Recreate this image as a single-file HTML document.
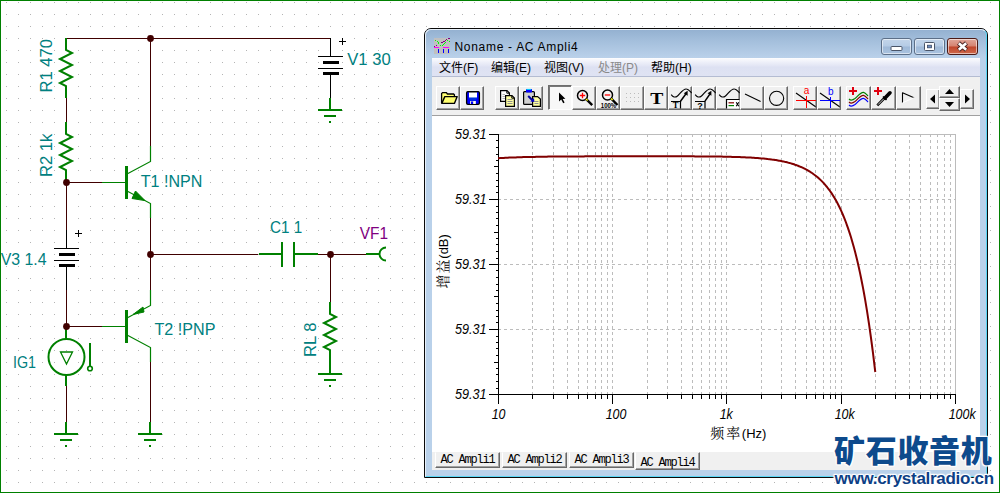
<!DOCTYPE html>
<html><head><meta charset="utf-8"><title>Noname - AC Ampli4</title>
<style>
html,body{margin:0;padding:0;background:#fff;}
body{width:1000px;height:493px;position:relative;overflow:hidden;font-family:"Liberation Sans","Noto Sans CJK SC",sans-serif;}
#win{position:absolute;left:424px;top:28px;width:564px;height:450px;box-sizing:border-box;border:1px solid #0a0a0a;border-radius:7px 7px 0 0;
 background:linear-gradient(to bottom,#93b0d0 0px,#a4bfdc 12px,#b9d0e9 28px,#b9d1ea 30px,#b9d1ea 100%);}
#win .hl{position:absolute;left:0;top:0;right:0;bottom:0;border-radius:6px 6px 0 0;border:1px solid;border-color:#e8f1fa #59d6f5 #59d6f5 #e8f1fa;}
#title{position:absolute;left:29.5px;top:9px;height:18px;line-height:18px;font-size:12px;letter-spacing:0.7px;color:#000;white-space:nowrap;}
#client{position:absolute;left:7px;top:29px;width:548px;height:412px;background:#f0f0f0;}
#menu{position:absolute;left:0;top:0;width:548px;height:19px;box-sizing:border-box;border-bottom:1px solid #b4bcd2;
 background:linear-gradient(to bottom,#fdfdfe 0px,#eef0f9 4px,#e2e5f4 8px,#dde1f2 9px,#dfe3f3 18px);font-size:12px;}
#menu span{position:absolute;top:3px;line-height:15px;white-space:nowrap;color:#000;}
#tb{position:absolute;left:0;top:19px;width:548px;height:39px;background:#f0f0f0;box-sizing:border-box;border-bottom:1px solid #a0a0a0;}
.b{position:absolute;top:9px;width:24px;height:24px;box-sizing:border-box;background:#f0f0f0;border:1px solid;border-color:#fff #696969 #696969 #fff;box-shadow:inset -1px -1px 0 #a0a0a0;}
.b.p{border-color:#6e6e6e #fff #fff #6e6e6e;box-shadow:inset 1px 1px 0 #787878;background:#f8f8f8;margin-top:-1px;height:25px;}

#tabs{position:absolute;left:0;top:394px;width:548px;height:18px;background:#f0f0f0;font-family:"Liberation Mono",monospace;font-size:12px;letter-spacing:-1.2px;}
.t{position:absolute;top:0;height:16px;box-sizing:border-box;border:1px solid;border-color:#f0f0f0 #696969 #696969 #fff;box-shadow:inset -1px -1px 0 #a0a0a0;line-height:14px;text-align:center;color:#000;white-space:nowrap;}
.t.a{top:0px;height:18px;border-top-color:#f0f0f0;line-height:20px;}
#wm1{position:absolute;left:834px;top:427px;font-family:"Noto Sans CJK SC",sans-serif;font-weight:900;font-size:31px;line-height:44px;color:#0d4a8c;white-space:nowrap;letter-spacing:0.7px;
 text-shadow:0 0 2px #fff,0 0 2px #fff,0 0 3px #fff,1px 1px 1px #fff,-1px -1px 1px #fff,1px -1px 1px #fff,-1px 1px 1px #fff;}
#wm2{position:absolute;left:834.5px;top:469px;font-family:"Liberation Sans",sans-serif;font-weight:bold;font-size:17px;line-height:20px;color:#0d3f86;white-space:nowrap;letter-spacing:-0.28px;
 text-shadow:0 0 2px #fff,0 0 2px #fff,0 0 3px #fff,1px 1px 1px #fff,-1px -1px 1px #fff,1px -1px 1px #fff,-1px 1px 1px #fff;}
.cb{position:absolute;top:9px;height:17px;box-sizing:border-box;border:1px solid #5c6f88;border-radius:3px;box-shadow:inset 0 0 0 1px rgba(255,255,255,.55);
 background:linear-gradient(to bottom,#c3d5ea 0,#b5cbe5 48%,#9fb9d8 52%,#aac3df 100%);}
.cb.x{border-color:#4b1a16;background:linear-gradient(to bottom,#e0a79b 0,#d5826f 48%,#c0452b 52%,#cf6a4c 100%);}
</style></head><body>
<svg id="sch" width="1000" height="493" viewBox="0 0 1000 493" style="position:absolute;left:0;top:0">
<defs><pattern id="gd" x="0" y="0" width="12" height="12" patternUnits="userSpaceOnUse"><rect x="6" y="2" width="1" height="1" fill="#b4b4b4"/></pattern></defs>
<rect x="0" y="0" width="1000" height="493" fill="#fff"/>
<rect x="0" y="0" width="1000" height="493" fill="url(#gd)" shape-rendering="crispEdges"/>
<path d="M66.5,38.5 H330.5 M150.5,38.5 V146 M66.5,98 V122 M66.5,182 V230 M66.5,182.5 H102 M150.5,218 V290 M150.5,254.5 H258 M318,254.5 H366 M330.5,254.5 V302 M66.5,290 V326 M66.5,326.5 H102 M66.5,386 V422 M150.5,362 V422" stroke="#400000" stroke-width="1" fill="none" shape-rendering="crispEdges"/>
<path d="M66,38 L66,50 L72,53 L60,59 L72,65 L60,71 L72,77 L60,83 L66,86 L66,98" fill="none" stroke="#008000" stroke-width="2" stroke-linejoin="miter"/>
<path d="M66,122 L66,134 L72,137 L60,143 L72,149 L60,155 L72,161 L60,167 L66,170 L66,182" fill="none" stroke="#008000" stroke-width="2" stroke-linejoin="miter"/>
<path d="M330,302 L330,314 L336,317 L324,323 L336,329 L324,335 L336,341 L324,347 L330,350 L330,362" fill="none" stroke="#008000" stroke-width="2" stroke-linejoin="miter"/>
<path d="M330,98 V111 M318,110 H342 M324,116 H336 M329,122 H331" stroke="#008000" stroke-width="2" fill="none" shape-rendering="crispEdges"/>
<path d="M330,362 V375 M318,374 H342 M324,380 H336 M329,386 H331" stroke="#008000" stroke-width="2" fill="none" shape-rendering="crispEdges"/>
<path d="M66,422 V435 M54,434 H78 M60,440 H72 M65,446 H67" stroke="#008000" stroke-width="2" fill="none" shape-rendering="crispEdges"/>
<path d="M150,422 V435 M138,434 H162 M144,440 H156 M149,446 H151" stroke="#008000" stroke-width="2" fill="none" shape-rendering="crispEdges"/>
<g shape-rendering="crispEdges" stroke="#000" fill="none"><path d="M330.5,38 V56 M318,56.5 H343 M318,68.5 H343 M330.5,75 V98" stroke-width="1"/><path d="M323,62.5 H339 M323,73.5 H339" stroke-width="3"/><path d="M339,41.5 H346 M342.5,38 V45" stroke-width="1"/></g>
<g shape-rendering="crispEdges" stroke="#000" fill="none"><path d="M66.5,230 V248 M54,248.5 H79 M54,260.5 H79 M66.5,267 V290" stroke-width="1"/><path d="M59,254.5 H75 M59,265.5 H75" stroke-width="3"/><path d="M75,233.5 H82 M78.5,230 V237" stroke-width="1"/></g>
<g stroke="#008000" fill="none"><path d="M102,182.5 H126" stroke-width="1" shape-rendering="crispEdges"/><path d="M126.5,166 V199" stroke-width="3" shape-rendering="crispEdges"/><path d="M127,174 L150.5,161.5 V146" stroke-width="1.2"/><path d="M127,191 L150.5,203.5 V218" stroke-width="1.2"/><path d="M145,200.6 L135.5,191 L132,198.5 Z" fill="#008000" stroke-width="1"/></g>
<g stroke="#008000" fill="none"><path d="M102,326.5 H126" stroke-width="1" shape-rendering="crispEdges"/><path d="M126.5,310 V343" stroke-width="3" shape-rendering="crispEdges"/><path d="M127,318 L150.5,305.5 V290" stroke-width="1.2"/><path d="M127,335 L150.5,347.5 V362" stroke-width="1.2"/><path d="M133,314.5 L143,307 L144,312 Z" fill="#008000" stroke-width="1"/></g>
<path d="M259,254 H282 M294,254 H318 M282,242 V267 M294,242 V267" stroke="#008000" stroke-width="2" fill="none" shape-rendering="crispEdges"/>
<path d="M366,254 H379" stroke="#008000" stroke-width="2" fill="none" shape-rendering="crispEdges"/>
<path d="M386,247.5 A6.5,6.5 0 0 0 386,260.5" stroke="#008000" stroke-width="2" fill="none"/>
<path d="M66,326 V339 M66,375 V386 M90,343 V366" stroke="#008000" stroke-width="2" fill="none" shape-rendering="crispEdges"/>
<circle cx="66.5" cy="357" r="18" stroke="#008000" stroke-width="2" fill="none"/>
<path d="M60.5,352 H72.5 L66.5,364 Z" stroke="#008000" stroke-width="1.3" fill="none"/>
<circle cx="90" cy="368.5" r="2.3" stroke="#008000" stroke-width="1.6" fill="none"/>
<circle cx="150.5" cy="38.5" r="3.4" fill="#400000"/>
<circle cx="66.5" cy="182.5" r="3.4" fill="#400000"/>
<circle cx="150.5" cy="254.5" r="3.4" fill="#400000"/>
<circle cx="330.5" cy="254.5" r="3.4" fill="#400000"/>
<circle cx="66.5" cy="326.5" r="3.4" fill="#400000"/>
<g font-family="'Liberation Sans', sans-serif">
<text x="347.3" y="65" fill="#008080" font-size="16.6">V1 30</text>
<text x="140.7" y="187" fill="#008080" font-size="16.6" textLength="61.7" lengthAdjust="spacingAndGlyphs">T1 !NPN</text>
<text x="154.5" y="335" fill="#008080" font-size="16.6" textLength="61" lengthAdjust="spacingAndGlyphs">T2 !PNP</text>
<text x="0.7" y="265" fill="#008080" font-size="16.6" textLength="45.9" lengthAdjust="spacingAndGlyphs">V3 1.4</text>
<text x="13" y="368" fill="#008080" font-size="16.6" textLength="23" lengthAdjust="spacingAndGlyphs">IG1</text>
<text x="270" y="233" fill="#008080" font-size="16.6" textLength="32.3" lengthAdjust="spacingAndGlyphs">C1 1</text>
<text x="359.8" y="239" fill="#800080" font-size="16.6" textLength="28.3" lengthAdjust="spacingAndGlyphs">VF1</text>
<text x="51.5" y="92.5" fill="#008080" font-size="16.6" transform="rotate(-90 51.5 92.5)">R1 470</text>
<text x="51.5" y="177" fill="#008080" font-size="16.6" transform="rotate(-90 51.5 177)">R2 1k</text>
<text x="315.5" y="357" fill="#008080" font-size="16.6" transform="rotate(-90 315.5 357)">RL 8</text>
</g>
<rect x="0.5" y="0.5" width="999" height="492" fill="none" stroke="#008000" stroke-width="1" shape-rendering="crispEdges"/>
</svg>
<div id="win"><div class="hl"></div>
<svg width="16" height="16" viewBox="0 0 16 16" shape-rendering="crispEdges" style="position:absolute;left:9px;top:9px"><rect x="0" y="0" width="16" height="16" fill="#c0c0c0"/><rect x="1" y="2" width="1" height="1" fill="#00ff00"/><rect x="3" y="3" width="1" height="1" fill="#00ff00"/><rect x="4" y="4" width="1" height="1" fill="#00ff00"/><rect x="4" y="5" width="1" height="1" fill="#00ff00"/><rect x="6" y="7" width="1" height="1" fill="#00ff00"/><rect x="8" y="7" width="1" height="1" fill="#00ff00"/><rect x="9" y="6" width="1" height="1" fill="#00ff00"/><rect x="10" y="5" width="1" height="1" fill="#00ff00"/><rect x="11" y="4" width="1" height="1" fill="#00ff00"/><rect x="13" y="2" width="1" height="1" fill="#00ff00"/><rect x="15" y="3" width="1" height="1" fill="#00ff00"/><rect x="14" y="0" width="2" height="1" fill="#800080"/><rect x="12" y="1" width="1" height="1" fill="#800080"/><rect x="11" y="2" width="1" height="1" fill="#800080"/><rect x="9" y="3" width="2" height="1" fill="#800080"/><rect x="7" y="4" width="2" height="1" fill="#800080"/><rect x="2" y="7" width="1" height="1" fill="#800080"/><rect x="0" y="8" width="1" height="1" fill="#800080"/><rect x="0" y="9" width="5" height="1" fill="#ff00ff"/><rect x="9" y="9" width="6" height="1" fill="#ff00ff"/><rect x="4" y="11" width="1" height="4" fill="#0000ff"/><rect x="9" y="11" width="1" height="4" fill="#0000ff"/><rect x="14" y="11" width="1" height="4" fill="#0000ff"/></svg>
<div id="title">Noname - AC Ampli4</div>
<div class="cb" style="left:456px;width:31px"><svg width="30" height="17" viewBox="0 0 30 17" style="position:absolute;left:-1px;top:-1px"><rect x="10" y="8.5" width="11" height="4" rx="1" fill="#fff" stroke="#4a5568" stroke-width="1"/></svg></div>
<div class="cb" style="left:489px;width:31px"><svg width="30" height="17" viewBox="0 0 30 17" style="position:absolute;left:-1px;top:-1px"><rect x="10.5" y="4.5" width="10" height="8" rx="1" fill="#fff" stroke="#4a5568" stroke-width="1"/><rect x="13.5" y="7.2" width="4" height="2.6" fill="#6f8fc0" stroke="#3c4a66" stroke-width=".8"/></svg></div>
<div class="cb x" style="left:522px;width:31px"><svg width="31" height="17" viewBox="0 0 31 17" style="position:absolute;left:-1px;top:-1px"><path d="M11.5,5 L19.5,12 M19.5,5 L11.5,12" stroke="#4a2220" stroke-width="4.4" stroke-linecap="butt"/><path d="M11.8,5.2 L19.2,11.8 M19.2,5.2 L11.8,11.8" stroke="#fff" stroke-width="2.6"/></svg></div>
<div id="client">
<div id="menu"><span style="left:7px">文件(F)</span><span style="left:59px">编辑(E)</span><span style="left:112px">视图(V)</span><span style="left:166px;color:#8a8a8a">处理(P)</span><span style="left:219px">帮助(H)</span></div>
<div id="tb"><div class="b " style="left:4px;width:24px"><svg width="24" height="24" viewBox="0 0 24 24" style="position:absolute;left:-1px;top:-1px;overflow:visible"><path d="M5.6,17 V7.6 L6.6,6.6 H10.4 L11.4,8 H17.6 L18.4,8.8 V10.5" fill="#ffff70" stroke="#000" stroke-width="1.3"/>
<path d="M5.8,17.4 L8.8,10.6 H21.2 L18.4,17.4 Z" fill="#ffff70" stroke="#000" stroke-width="1.4" stroke-linejoin="round"/></svg></div><div class="b " style="left:28px;width:24px"><svg width="24" height="24" viewBox="0 0 24 24" style="position:absolute;left:-1px;top:-1px;overflow:visible"><rect x="6.6" y="5.6" width="12.8" height="12.8" rx="1.3" fill="#0000ff" stroke="#000" stroke-width="1.3"/>
<rect x="9" y="6" width="8" height="5.6" fill="#fff"/><path d="M9,6 H17" stroke="#000" stroke-width="1"/>
<path d="M9,12.1 H17 M10,13.9 H16" stroke="#0080a0" stroke-width=".6"/>
<rect x="10" y="15" width="6" height="3" fill="#d8d8d8"/><rect x="11" y="15.5" width="2" height="2.5" fill="#0000ff"/><rect x="14" y="15.3" width="1" height="2.6" fill="#fff"/></svg></div><div class="b " style="left:63px;width:24px"><svg width="24" height="24" viewBox="0 0 24 24" style="position:absolute;left:-1px;top:-1px;overflow:visible"><path d="M5.6,4.6 H12 L14.4,7 V15.4 H5.6 Z" fill="#fff" stroke="#000" stroke-width="1.2"/><path d="M11.8,4.8 V7.2 H14.2" fill="none" stroke="#000" stroke-width="1"/>
<path d="M7.5,8.5 H10 M7.5,10.5 H10 M7.5,12.5 H10" stroke="#b0b0b0" stroke-width="1"/>
<path d="M10.6,9.6 H17 L19.4,12 V20.4 H10.6 Z" fill="#ffffa0" stroke="#000" stroke-width="1.2"/><path d="M16.8,9.8 V12.2 H19.2" fill="none" stroke="#000" stroke-width="1"/>
<path d="M12.5,13.5 H17.5 M12.5,15.5 H17.5 M12.5,17.5 H17.5" stroke="#909090" stroke-width="1"/></svg></div><div class="b " style="left:87px;width:24px"><svg width="24" height="24" viewBox="0 0 24 24" style="position:absolute;left:-1px;top:-1px;overflow:visible"><rect x="4.6" y="5.6" width="10.8" height="12.8" rx="1" fill="#d0d0d0" stroke="#000" stroke-width="1.2"/>
<rect x="7" y="3" width="6" height="3.6" rx=".8" fill="#0000ff"/><path d="M7.5,3.4 H12" stroke="#00e0ff" stroke-width="1"/>
<path d="M13.6,10.6 H18.6 L21.4,13 V20.4 H13.6 Z" fill="#ffffa0" stroke="#000" stroke-width="1.2"/>
<path d="M15.5,15.5 H19.5 M15.5,17.5 H19.5" stroke="#909090" stroke-width="1"/>
<path d="M9.2,10 L13.4,14.2" stroke="#0000a0" stroke-width="2"/><path d="M15.4,16 L15,12 L11.4,15.6 Z" fill="#0000c0"/></svg></div><div class="b p" style="left:116px;width:24px"><svg width="24" height="24" viewBox="0 0 24 24" style="position:absolute;left:-1px;top:-1px;overflow:visible"><path d="M11,7.5 V16.5 L13.2,14.6 L15.2,18.2 L16.6,17.4 L14.7,14 L17.4,13.8 Z" fill="#000"/></svg></div><div class="b " style="left:140px;width:24px"><svg width="24" height="24" viewBox="0 0 24 24" style="position:absolute;left:-1px;top:-1px;overflow:visible"><circle cx="10.5" cy="9.5" r="5" fill="#f4f4f4" stroke="#000" stroke-width="1.5"/>
<path d="M7.8,9.5 H13.2 M10.5,6.8 V12.2" stroke="#ff0000" stroke-width="1.3"/>
<path d="M14.2,13.2 L20.2,19.2" stroke="#000" stroke-width="2.4"/><path d="M14,13 L15.6,14.6" stroke="#ffff00" stroke-width="1.4"/></svg></div><div class="b " style="left:164px;width:24px"><svg width="24" height="24" viewBox="0 0 24 24" style="position:absolute;left:-1px;top:-1px;overflow:visible"><circle cx="11.5" cy="9" r="5" fill="#f4f4f4" stroke="#000" stroke-width="1.5"/>
<path d="M8.8,9 H14.2" stroke="#ff0000" stroke-width="1.3"/>
<path d="M15.2,12.7 L21.5,19" stroke="#000" stroke-width="2.4"/><path d="M15,12.5 L16.6,14.1" stroke="#ffff00" stroke-width="1.4"/>
<text x="4.8" y="22" font-family="'Liberation Sans',sans-serif" font-weight="bold" font-size="7" fill="#000" textLength="15.4" lengthAdjust="spacingAndGlyphs">100%</text></svg></div><div class="b " style="left:188px;width:24px"><svg width="24" height="24" viewBox="0 0 24 24" style="position:absolute;left:-1px;top:-1px;overflow:visible"><rect x="6" y="7" width="1" height="1" fill="#bcbcbc"/><rect x="6" y="11" width="1" height="1" fill="#bcbcbc"/><rect x="6" y="15" width="1" height="1" fill="#bcbcbc"/><rect x="10" y="7" width="1" height="1" fill="#bcbcbc"/><rect x="10" y="11" width="1" height="1" fill="#bcbcbc"/><rect x="10" y="15" width="1" height="1" fill="#bcbcbc"/><rect x="14" y="7" width="1" height="1" fill="#bcbcbc"/><rect x="14" y="11" width="1" height="1" fill="#bcbcbc"/><rect x="14" y="15" width="1" height="1" fill="#bcbcbc"/><rect x="18" y="7" width="1" height="1" fill="#bcbcbc"/><rect x="18" y="11" width="1" height="1" fill="#bcbcbc"/><rect x="18" y="15" width="1" height="1" fill="#bcbcbc"/></svg></div><div class="b " style="left:212px;width:24px"><svg width="24" height="24" viewBox="0 0 24 24" style="position:absolute;left:-1px;top:-1px;overflow:visible"><text x="12.8" y="17.8" text-anchor="middle" font-family="'Liberation Serif',serif" font-weight="bold" font-size="17.5" fill="#000" transform="translate(12.8 0) scale(1.12 1) translate(-12.8 0)">T</text></svg></div><div class="b " style="left:236px;width:24px"><svg width="24" height="24" viewBox="0 0 24 24" style="position:absolute;left:-1px;top:-1px;overflow:visible"><path d="M3.2,8.6 C5,11 7,12 9.5,10 C12,8 15,2.5 18.5,3 C20.5,3.2 22,5.5 23.6,7" fill="none" stroke="#000" stroke-width="1.1"/>
<path d="M3,15.5 H12.5 M12.5,15 V22.5" stroke="#000" stroke-width="1.2" fill="none"/><path d="M12.5,15.2 L18,7.8" stroke="#000" stroke-width="1.5"/><path d="M19.6,4.8 L19.6,9.8 L15.8,7.2 Z" fill="#000"/>
<text x="7.6" y="22.3" text-anchor="middle" font-family="'Liberation Serif',serif" font-weight="bold" font-size="8.5" fill="#000">T</text></svg></div><div class="b " style="left:260px;width:24px"><svg width="24" height="24" viewBox="0 0 24 24" style="position:absolute;left:-1px;top:-1px;overflow:visible"><path d="M3.2,8.6 C5,11 7,12 9.5,10 C12,8 15,2.5 18.5,3 C20.5,3.2 22,5.5 23.6,7" fill="none" stroke="#000" stroke-width="1.1"/>
<path d="M3,15.5 H13 M13,15 V22.5" stroke="#000" stroke-width="1.2" fill="none"/><path d="M13,15.2 L18,7.8" stroke="#000" stroke-width="1.5"/><path d="M19.4,4.8 L19.4,9.8 L15.6,7.2 Z" fill="#000"/>
<text x="8" y="22.6" text-anchor="middle" font-family="'Liberation Sans',sans-serif" font-weight="bold" font-size="9" fill="#000">?</text></svg></div><div class="b " style="left:284px;width:24px"><svg width="24" height="24" viewBox="0 0 24 24" style="position:absolute;left:-1px;top:-1px;overflow:visible"><path d="M3.2,8.6 C5,11 7,12 9.5,10 C12,8 15,2.5 18.5,3 C20.5,3.2 22,5.5 23.6,7" fill="none" stroke="#000" stroke-width="1.1"/>
<rect x="10.5" y="13.5" width="13" height="9" fill="#fff"/><path d="M10.5,22.5 V13.5 H23.5" stroke="#000" stroke-width="1.2" fill="none"/>
<path d="M12.5,16.8 H18" stroke="#800000" stroke-width="1.2"/><path d="M12.5,19.6 H18" stroke="#008000" stroke-width="1.2"/>
<path d="M20.2,16.2 L22.8,20.2 M22.8,16.2 L20.2,20.2" stroke="#000" stroke-width="1.1"/></svg></div><div class="b " style="left:308px;width:24px"><svg width="24" height="24" viewBox="0 0 24 24" style="position:absolute;left:-1px;top:-1px;overflow:visible"><path d="M5,8 L20.6,15.4" stroke="#000" stroke-width="1.1"/></svg></div><div class="b " style="left:332px;width:24px"><svg width="24" height="24" viewBox="0 0 24 24" style="position:absolute;left:-1px;top:-1px;overflow:visible"><circle cx="12.6" cy="12.3" r="7.1" fill="none" stroke="#000" stroke-width="1.1"/></svg></div><div class="b " style="left:361px;width:24px"><svg width="24" height="24" viewBox="0 0 24 24" style="position:absolute;left:-1px;top:-1px;overflow:visible"><path d="M3,7 L22.6,20.8" stroke="#000" stroke-width="1.1"/><path d="M3,14.5 H23 M13.5,9.5 V22" stroke="#ff0000" stroke-width="1.1" shape-rendering="crispEdges"/>
<text x="13.6" y="8.2" text-anchor="middle" font-family="'Liberation Sans',sans-serif" font-size="10" fill="#ff0000">a</text></svg></div><div class="b " style="left:385px;width:24px"><svg width="24" height="24" viewBox="0 0 24 24" style="position:absolute;left:-1px;top:-1px;overflow:visible"><path d="M3,7 L22.6,20.8" stroke="#000" stroke-width="1.1"/><path d="M3,14.5 H23 M13.5,10.5 V22" stroke="#0000ff" stroke-width="1.1" shape-rendering="crispEdges"/>
<text x="13.8" y="8.6" text-anchor="middle" font-family="'Liberation Sans',sans-serif" font-size="10" fill="#0000ff">b</text></svg></div><div class="b " style="left:414px;width:25px"><svg width="25" height="24" viewBox="0 0 25 24" style="position:absolute;left:-1px;top:-1px;overflow:visible"><path d="M3,5 H11 M7,1 V9" stroke="#e00010" stroke-width="2.6" shape-rendering="crispEdges"/><path d="M3,13 C5,15 7,14 9,12.5 C12,10 14.5,6 17.5,6.3 C19.5,6.6 21,9 22,10" fill="none" stroke="#008000" stroke-width="1.2"/><path d="M3,13 C5,15 7,14 9,12.5 C12,10 14.5,6 17.5,6.3 C19.5,6.6 21,9 22,10" fill="none" stroke="#800000" stroke-width="1.2" transform="translate(0 3)"/><path d="M3,13 C5,15 7,14 9,12.5 C12,10 14.5,6 17.5,6.3 C19.5,6.6 21,9 22,10" fill="none" stroke="#0000ff" stroke-width="1.2" transform="translate(0 6)"/></svg></div><div class="b " style="left:439px;width:25px"><svg width="25" height="24" viewBox="0 0 25 24" style="position:absolute;left:-1px;top:-1px;overflow:visible"><path d="M3,5 H11 M7,1 V9" stroke="#e00010" stroke-width="2.6" shape-rendering="crispEdges"/><path d="M6.3,19.3 L13.5,12" stroke="#000" stroke-width="2.6"/><path d="M7,18.6 L13,12.6" stroke="#f0f0f0" stroke-width=".9"/>
<path d="M12,10.5 L15.5,14" stroke="#000" stroke-width="1.6"/><path d="M14,12 L19,6.8" stroke="#000" stroke-width="3.6" stroke-linecap="round"/></svg></div><div class="b " style="left:464px;width:25px"><svg width="25" height="24" viewBox="0 0 25 24" style="position:absolute;left:-1px;top:-1px;overflow:visible"><path d="M6.5,6.5 V17" stroke="#000" stroke-width="1.1"/><path d="M6.5,6.8 L18,11.8" stroke="#000" stroke-width="1.1"/><path d="M18,11.8 L6.5,16.8" stroke="#fff" stroke-width="1.1"/></svg></div><div class="b" style="left:494px;top:12px;width:14px;height:20px"><svg width="14" height="20" viewBox="0 0 14 20" style="position:absolute;left:-1px;top:-1px;overflow:visible"><path d="M4,10 L9,5.5 V14.5 Z" fill="#000"/></svg></div><div class="b" style="left:528px;top:12px;width:14px;height:20px"><svg width="14" height="20" viewBox="0 0 14 20" style="position:absolute;left:-1px;top:-1px;overflow:visible"><path d="M10,10 L5,5.5 V14.5 Z" fill="#000"/></svg></div><div class="b" style="left:507px;top:9px;width:21px;height:12px"><svg width="21" height="12" viewBox="0 0 21 12" style="position:absolute;left:-1px;top:-1px;overflow:visible"><path d="M10.5,3 L15,8 H6 Z" fill="#000"/></svg></div><div class="b" style="left:507px;top:21px;width:21px;height:13px"><svg width="21" height="13" viewBox="0 0 21 13" style="position:absolute;left:-1px;top:-1px;overflow:visible"><path d="M10.5,9 L15,4 H6 Z" fill="#000"/></svg></div></div>
<svg id="plot" width="548" height="336" viewBox="432 116 548 336" style="position:absolute;left:0;top:58px">
<rect x="432" y="116" width="548" height="336" fill="#fff"/>
<path d="M532.5,134 V394 M553.5,134 V394 M567.5,134 V394 M578.5,134 V394 M587.5,134 V394 M595.5,134 V394 M601.5,134 V394 M607.5,134 V394 M612.5,134 V394 M647.5,134 V394 M667.5,134 V394 M681.5,134 V394 M692.5,134 V394 M701.5,134 V394 M709.5,134 V394 M715.5,134 V394 M721.5,134 V394 M726.5,134 V394 M761.5,134 V394 M781.5,134 V394 M795.5,134 V394 M806.5,134 V394 M815.5,134 V394 M823.5,134 V394 M830.5,134 V394 M835.5,134 V394 M841.5,134 V394 M875.5,134 V394 M895.5,134 V394 M909.5,134 V394 M920.5,134 V394 M930.5,134 V394 M937.5,134 V394 M944.5,134 V394 M950.5,134 V394" stroke="#bcbcbc" stroke-width="1" stroke-dasharray="3 3" fill="none" shape-rendering="crispEdges"/>
<path d="M498,199.5 H955 M498,264.5 H955 M498,329.5 H955" stroke="#bcbcbc" stroke-width="1" stroke-dasharray="3 3" fill="none" shape-rendering="crispEdges"/>
<path d="M498,134.5 H956 M955.5,134 V394" stroke="#bcbcbc" stroke-width="1" fill="none" shape-rendering="crispEdges"/>
<path d="M498.5,134 V404 M489,394.5 H956 M489,134.5 H498 M489,199.5 H498 M489,264.5 H498 M489,329.5 H498 M489,394.5 H498 M496,140.5 H498 M496,147.5 H498 M496,154.5 H498 M496,160.5 H498 M494,166.5 H498 M496,173.5 H498 M496,180.5 H498 M496,186.5 H498 M496,192.5 H498 M496,206.5 H498 M496,212.5 H498 M496,218.5 H498 M496,225.5 H498 M494,232.5 H498 M496,238.5 H498 M496,244.5 H498 M496,251.5 H498 M496,258.5 H498 M496,270.5 H498 M496,277.5 H498 M496,284.5 H498 M496,290.5 H498 M494,296.5 H498 M496,303.5 H498 M496,310.5 H498 M496,316.5 H498 M496,322.5 H498 M496,336.5 H498 M496,342.5 H498 M496,348.5 H498 M496,355.5 H498 M494,362.5 H498 M496,368.5 H498 M496,374.5 H498 M496,381.5 H498 M496,388.5 H498 M498.5,394 V404 M532.5,394 V399 M553.5,394 V399 M567.5,394 V399 M578.5,394 V399 M587.5,394 V399 M595.5,394 V399 M601.5,394 V399 M607.5,394 V399 M612.5,394 V404 M647.5,394 V399 M667.5,394 V399 M681.5,394 V399 M692.5,394 V399 M701.5,394 V399 M709.5,394 V399 M715.5,394 V399 M721.5,394 V399 M726.5,394 V404 M761.5,394 V399 M781.5,394 V399 M795.5,394 V399 M806.5,394 V399 M815.5,394 V399 M823.5,394 V399 M830.5,394 V399 M835.5,394 V399 M841.5,394 V404 M875.5,394 V399 M895.5,394 V399 M909.5,394 V399 M920.5,394 V399 M930.5,394 V399 M937.5,394 V399 M944.5,394 V399 M950.5,394 V399 M955.5,394 V404" stroke="#000" stroke-width="1" fill="none" shape-rendering="crispEdges"/>
<path d="M498.0,158.2 L499.0,158.2 L500.0,158.1 L501.0,158.0 L502.0,158.0 L503.0,157.9 L504.0,157.9 L505.0,157.8 L506.0,157.8 L507.0,157.7 L508.0,157.7 L509.0,157.6 L510.0,157.6 L511.0,157.6 L512.0,157.5 L513.0,157.5 L514.0,157.4 L515.0,157.4 L516.0,157.4 L517.0,157.3 L518.0,157.3 L519.0,157.3 L520.0,157.2 L521.0,157.2 L522.0,157.2 L523.0,157.1 L524.0,157.1 L525.0,157.1 L526.0,157.1 L527.0,157.0 L528.0,157.0 L529.0,157.0 L530.0,157.0 L531.0,156.9 L532.0,156.9 L533.0,156.9 L534.0,156.9 L535.0,156.9 L536.0,156.8 L537.0,156.8 L538.0,156.8 L539.0,156.8 L540.0,156.8 L541.0,156.8 L542.0,156.7 L543.0,156.7 L544.0,156.7 L545.0,156.7 L546.0,156.7 L547.0,156.7 L548.0,156.6 L549.0,156.6 L550.0,156.6 L551.0,156.6 L552.0,156.6 L553.0,156.6 L554.0,156.6 L555.0,156.6 L556.0,156.5 L557.0,156.5 L558.0,156.5 L559.0,156.5 L560.0,156.5 L561.0,156.5 L562.0,156.5 L563.0,156.5 L564.0,156.5 L565.0,156.5 L566.0,156.5 L567.0,156.5 L568.0,156.4 L569.0,156.4 L570.0,156.4 L571.0,156.4 L572.0,156.4 L573.0,156.4 L574.0,156.4 L575.0,156.4 L576.0,156.4 L577.0,156.4 L578.0,156.4 L579.0,156.4 L580.0,156.4 L581.0,156.4 L582.0,156.4 L583.0,156.4 L584.0,156.4 L585.0,156.3 L586.0,156.3 L587.0,156.3 L588.0,156.3 L589.0,156.3 L590.0,156.3 L591.0,156.3 L592.0,156.3 L593.0,156.3 L594.0,156.3 L595.0,156.3 L596.0,156.3 L597.0,156.3 L598.0,156.3 L599.0,156.3 L600.0,156.3 L601.0,156.3 L602.0,156.3 L603.0,156.3 L604.0,156.3 L605.0,156.3 L606.0,156.3 L607.0,156.3 L608.0,156.3 L609.0,156.3 L610.0,156.3 L611.0,156.3 L612.0,156.3 L613.0,156.3 L614.0,156.3 L615.0,156.3 L616.0,156.3 L617.0,156.3 L618.0,156.3 L619.0,156.3 L620.0,156.3 L621.0,156.3 L622.0,156.3 L623.0,156.3 L624.0,156.3 L625.0,156.3 L626.0,156.3 L627.0,156.3 L628.0,156.2 L629.0,156.2 L630.0,156.2 L631.0,156.2 L632.0,156.2 L633.0,156.2 L634.0,156.2 L635.0,156.2 L636.0,156.2 L637.0,156.2 L638.0,156.2 L639.0,156.2 L640.0,156.2 L641.0,156.2 L642.0,156.2 L643.0,156.2 L644.0,156.2 L645.0,156.2 L646.0,156.2 L647.0,156.2 L648.0,156.2 L649.0,156.2 L650.0,156.2 L651.0,156.2 L652.0,156.2 L653.0,156.2 L654.0,156.2 L655.0,156.2 L656.0,156.2 L657.0,156.2 L658.0,156.2 L659.0,156.3 L660.0,156.3 L661.0,156.3 L662.0,156.3 L663.0,156.3 L664.0,156.3 L665.0,156.3 L666.0,156.3 L667.0,156.3 L668.0,156.3 L669.0,156.3 L670.0,156.3 L671.0,156.3 L672.0,156.3 L673.0,156.3 L674.0,156.3 L675.0,156.3 L676.0,156.3 L677.0,156.3 L678.0,156.3 L679.0,156.3 L680.0,156.3 L681.0,156.3 L682.0,156.3 L683.0,156.3 L684.0,156.3 L685.0,156.3 L686.0,156.3 L687.0,156.3 L688.0,156.3 L689.0,156.3 L690.0,156.3 L691.0,156.3 L692.0,156.3 L693.0,156.3 L694.0,156.3 L695.0,156.4 L696.0,156.4 L697.0,156.4 L698.0,156.4 L699.0,156.4 L700.0,156.4 L701.0,156.4 L702.0,156.4 L703.0,156.4 L704.0,156.4 L705.0,156.4 L706.0,156.4 L707.0,156.4 L708.0,156.5 L709.0,156.5 L710.0,156.5 L711.0,156.5 L712.0,156.5 L713.0,156.5 L714.0,156.5 L715.0,156.5 L716.0,156.6 L717.0,156.6 L718.0,156.6 L719.0,156.6 L720.0,156.6 L721.0,156.6 L722.0,156.6 L723.0,156.7 L724.0,156.7 L725.0,156.7 L726.0,156.7 L727.0,156.7 L728.0,156.8 L729.0,156.8 L730.0,156.8 L731.0,156.8 L732.0,156.9 L733.0,156.9 L734.0,156.9 L735.0,157.0 L736.0,157.0 L737.0,157.0 L738.0,157.1 L739.0,157.1 L740.0,157.1 L741.0,157.2 L742.0,157.2 L743.0,157.2 L744.0,157.3 L745.0,157.3 L746.0,157.4 L747.0,157.4 L748.0,157.5 L749.0,157.5 L750.0,157.6 L751.0,157.6 L752.0,157.7 L753.0,157.8 L754.0,157.8 L755.0,157.9 L756.0,158.0 L757.0,158.0 L758.0,158.1 L759.0,158.2 L760.0,158.3 L761.0,158.4 L762.0,158.4 L763.0,158.5 L764.0,158.6 L765.0,158.7 L766.0,158.8 L767.0,158.9 L768.0,159.1 L769.0,159.2 L770.0,159.3 L771.0,159.4 L772.0,159.6 L773.0,159.7 L774.0,159.8 L775.0,160.0 L776.0,160.1 L777.0,160.3 L778.0,160.5 L779.0,160.7 L780.0,160.8 L781.0,161.0 L782.0,161.2 L783.0,161.4 L784.0,161.6 L785.0,161.9 L786.0,162.1 L787.0,162.3 L788.0,162.6 L789.0,162.9 L790.0,163.1 L791.0,163.4 L792.0,163.7 L793.0,164.0 L794.0,164.3 L795.0,164.7 L796.0,165.0 L797.0,165.4 L798.0,165.8 L799.0,166.2 L800.0,166.6 L801.0,167.0 L802.0,167.4 L803.0,167.9 L804.0,168.4 L805.0,168.9 L806.0,169.4 L807.0,170.0 L808.0,170.5 L809.0,171.1 L810.0,171.7 L811.0,172.4 L812.0,173.0 L813.0,173.7 L814.0,174.5 L815.0,175.2 L816.0,176.0 L817.0,176.8 L818.0,177.6 L819.0,178.5 L820.0,179.4 L821.0,180.4 L822.0,181.4 L823.0,182.4 L824.0,183.5 L825.0,184.6 L826.0,185.8 L827.0,187.0 L828.0,188.3 L829.0,189.6 L830.0,191.0 L831.0,192.4 L832.0,193.9 L833.0,195.5 L834.0,197.1 L835.0,198.8 L836.0,200.5 L837.0,202.3 L838.0,204.2 L839.0,206.2 L840.0,208.3 L841.0,210.4 L842.0,212.6 L843.0,215.0 L844.0,217.4 L845.0,219.9 L846.0,222.5 L847.0,225.3 L848.0,228.1 L849.0,231.1 L850.0,234.1 L851.0,237.3 L852.0,240.7 L853.0,244.2 L854.0,247.8 L855.0,251.6 L856.0,255.5 L857.0,259.6 L858.0,263.8 L859.0,268.2 L860.0,272.9 L861.0,277.7 L862.0,282.7 L863.0,287.9 L864.0,293.3 L865.0,298.9 L866.0,304.8 L867.0,310.9 L868.0,317.3 L869.0,323.9 L870.0,330.8 L871.0,338.0 L872.0,345.5 L873.0,353.2 L874.0,361.4 L875.0,369.8 L875.3,372.0" stroke="#800000" stroke-width="2" fill="none" stroke-linejoin="round"/>
<g font-family="'Liberation Sans', sans-serif" font-style="italic" font-size="14" fill="#000">
<text x="455" y="139.1" textLength="31.6" lengthAdjust="spacingAndGlyphs">59.31</text>
<text x="455" y="204.1" textLength="31.6" lengthAdjust="spacingAndGlyphs">59.31</text>
<text x="455" y="269.1" textLength="31.6" lengthAdjust="spacingAndGlyphs">59.31</text>
<text x="455" y="334.1" textLength="31.6" lengthAdjust="spacingAndGlyphs">59.31</text>
<text x="455" y="399.1" textLength="31.6" lengthAdjust="spacingAndGlyphs">59.31</text>
<text x="491.7" y="419.1" textLength="13.8" lengthAdjust="spacingAndGlyphs">10</text>
<text x="605.7" y="419.1" textLength="20.7" lengthAdjust="spacingAndGlyphs">100</text>
<text x="719.7" y="419.1" textLength="13.1" lengthAdjust="spacingAndGlyphs">1k</text>
<text x="834.7" y="419.1" textLength="20.0" lengthAdjust="spacingAndGlyphs">10k</text>
<text x="948.7" y="419.1" textLength="26.9" lengthAdjust="spacingAndGlyphs">100k</text>
</g>
<text x="710.3" y="437.8" font-size="14" fill="#000" font-family="'Liberation Sans', 'Noto Serif CJK SC', serif"><tspan letter-spacing="2">频率</tspan><tspan font-size="13" dx="-0.5">(Hz)</tspan></text>
<text x="447.8" y="288.6" font-size="14" fill="#000" transform="rotate(-90 447.8 288.6)" font-family="'Liberation Sans', 'Noto Serif CJK SC', serif"><tspan letter-spacing="1.2">增益</tspan><tspan font-size="13" dx="-0.5">(dB)</tspan></text>
</svg>
<div id="tabs"><div class="t" style="left:3px;width:65px">AC Ampli1</div><div class="t" style="left:70px;width:65px">AC Ampli2</div><div class="t" style="left:137px;width:65px">AC Ampli3</div><div class="t a" style="left:203px;width:65px">AC Ampli4</div></div>
</div></div>
<div id="wm1">矿石收音机</div>
<div id="wm2">www.crystalradio.cn</div>
</body></html>
